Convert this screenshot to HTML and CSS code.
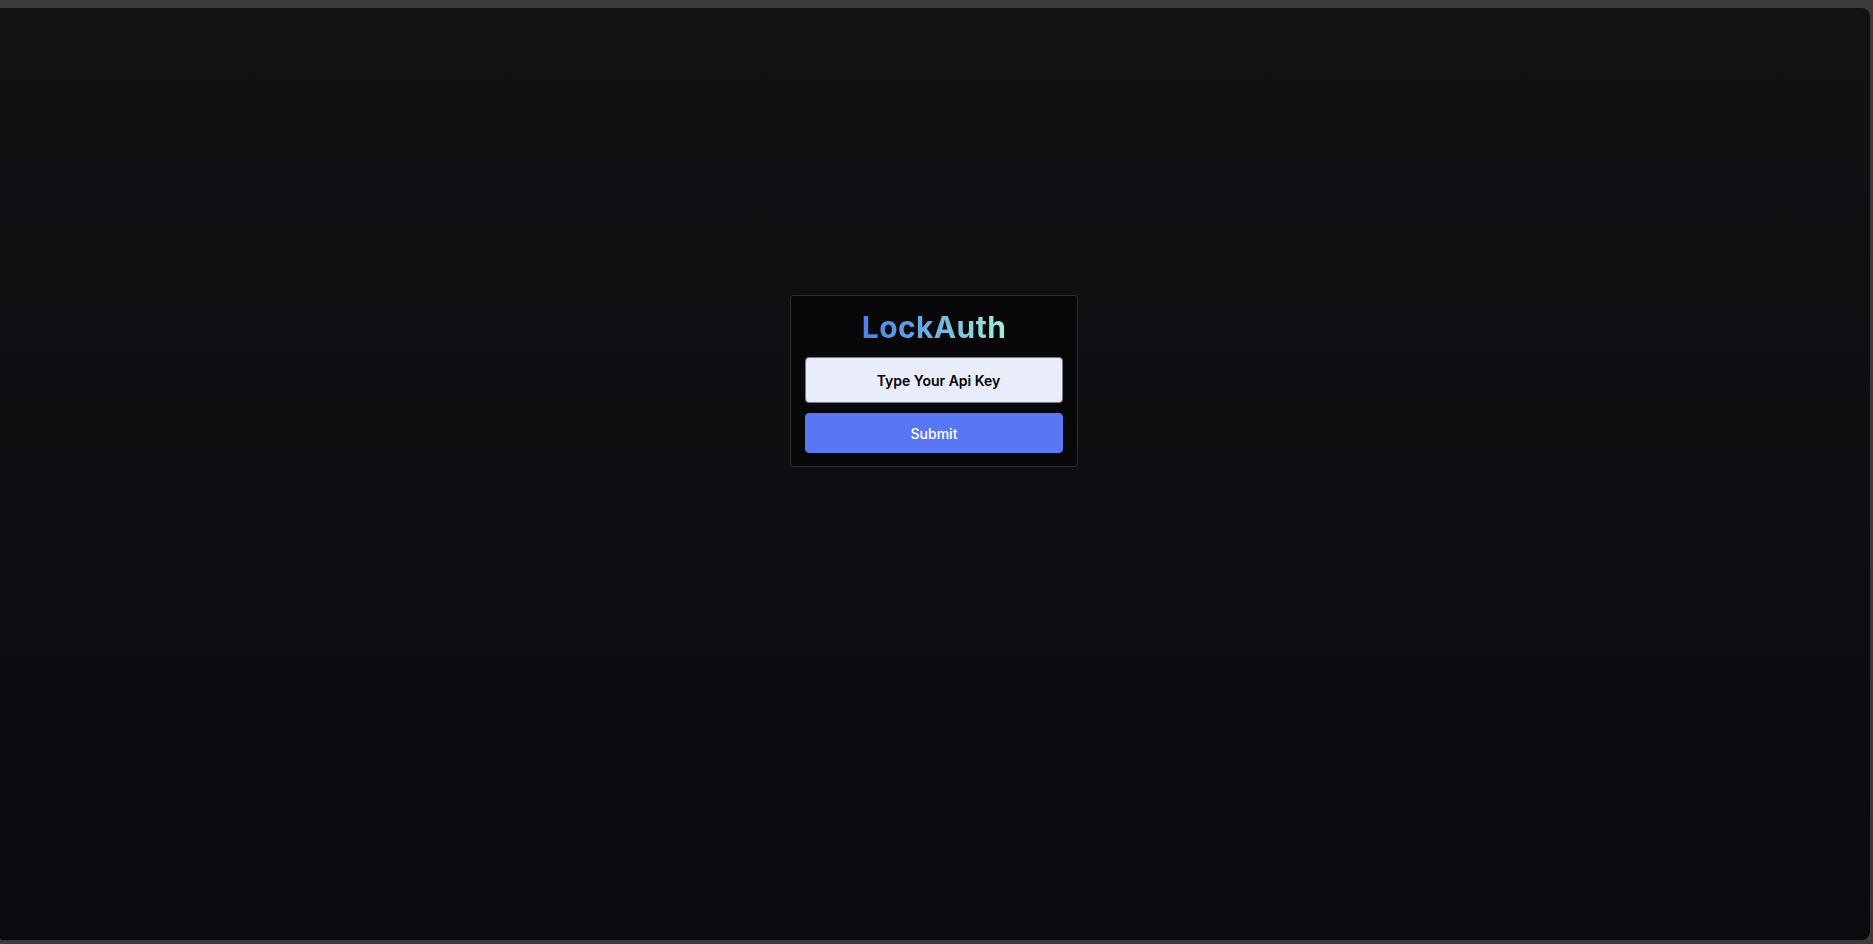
FILE: index.html
```html
<!DOCTYPE html>
<html lang="en">
<head>
<meta charset="utf-8">
<title>LockAuth</title>
<link rel="stylesheet" href="styles.css">
</head>
<body>
<div class="frame">
  <main class="stage">
    <form class="card">
      <h1 class="brand">LockAuth</h1>
      <input class="key-input" type="text" placeholder="Type Your Api Key">
      <button class="submit" type="button">Submit</button>
    </form>
  </main>
</div>
</body>
</html>
```
FILE: styles.css
```css
html, body {
  margin: 0;
  padding: 0;
  height: 100%;
}
body {
  background: #3c3c3c;
  font-family: "Inter", "Noto Sans", "Liberation Sans", sans-serif;
  overflow: hidden;
}
.frame {
  box-sizing: border-box;
  height: 100%;
  padding: 8px 3px 4px 0;
}
.stage {
  box-sizing: border-box;
  height: 100%;
  border-radius: 0 8px 8px 2px;
  background: linear-gradient(180deg, #111214 0%, #0d0e11 60%, #0b0c10 100%);
  display: flex;
  justify-content: center;
  align-items: flex-start;
  padding-top: 287px;
  padding-right: 2px;
}
.card {
  box-sizing: border-box;
  width: 288px;
  background: #08080a;
  border: 1px solid #2e2e31;
  border-radius: 3px;
  padding: 11px 14px 13px 14px;
  display: flex;
  flex-direction: column;
  align-items: stretch;
}
.brand {
  margin: 0 0 10px 0;
  text-align: center;
  font-size: 30px;
  font-weight: 700;
  line-height: 40px;
  letter-spacing: 0.4px;
  background: linear-gradient(90deg, #4c82e4 0%, #6fb0e2 50%, #a4f0d6 100%);
  -webkit-background-clip: text;
  background-clip: text;
  color: transparent;
  align-self: center;
}
.key-input {
  box-sizing: border-box;
  height: 46px;
  width: 100%;
  margin: 0;
  padding: 0 0 0 9px;
  border: 1px solid #7a7b82;
  border-radius: 4px;
  background: #e9ecfa;
  text-align: center;
  font-family: inherit;
  font-size: 14px;
  font-weight: 600;
  color: #000;
  outline: none;
}
.key-input::placeholder {
  color: #000;
  opacity: 1;
}
.submit {
  box-sizing: border-box;
  margin-top: 10px;
  height: 40px;
  width: 100%;
  border: 1px solid #5a79f2;
  border-radius: 4px;
  background: #5877f2;
  color: #fff;
  font-family: inherit;
  font-size: 14px;
  font-weight: 500;
  cursor: pointer;
}
```
